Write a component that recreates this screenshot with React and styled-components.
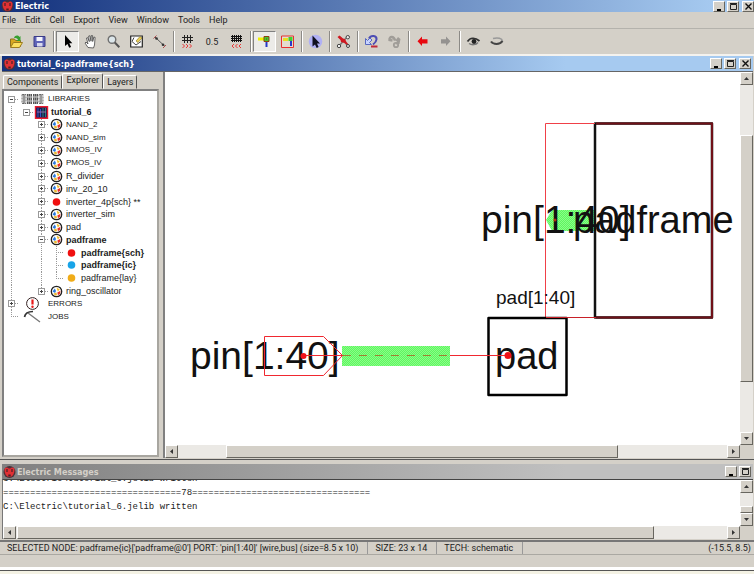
import React, { useState } from "react";
import styled, { createGlobalStyle, css } from "styled-components";

const GlobalStyle = createGlobalStyle`
  * {
    box-sizing: border-box;
  }

  body {
    margin: 0;
    background: #d4d0c8;
    color: #222;
    font-family: Roboto, "DejaVu Sans Condensed", sans-serif;
    font-size: 9px;
    line-height: 12px;
  }

  button {
    padding: 0;
    border: none;
    background: none;
    color: inherit;
    font: inherit;
  }
`;

const MENUS = ["File", "Edit", "Cell", "Export", "View", "Window", "Tools", "Help"];

const TREE = [
  { guides: ["minusTop"], icon: "libraries", label: "LIBRARIES" },
  { guides: ["line", "minusTop"], icon: "library", label: "tutorial_6", bold: true },
  { guides: ["line", "blank", "plus"], icon: "cell", label: "NAND_2" },
  { guides: ["line", "blank", "plus"], icon: "cell", label: "NAND_sim" },
  { guides: ["line", "blank", "plus"], icon: "cell", label: "NMOS_IV" },
  { guides: ["line", "blank", "plus"], icon: "cell", label: "PMOS_IV" },
  { guides: ["line", "blank", "plus"], icon: "cell", label: "R_divider" },
  { guides: ["line", "blank", "plus"], icon: "cell", label: "inv_20_10" },
  { guides: ["line", "blank", "plus"], icon: "red", label: "inverter_4p{sch} **" },
  { guides: ["line", "blank", "plus"], icon: "cell", label: "inverter_sim" },
  { guides: ["line", "blank", "plus"], icon: "cell", label: "pad" },
  { guides: ["line", "blank", "minus"], icon: "cell", label: "padframe", bold: true },
  { guides: ["line", "blank", "line", "tee"], icon: "red", label: "padframe{sch}", bold: true },
  { guides: ["line", "blank", "line", "tee"], icon: "blue", label: "padframe{ic}", bold: true },
  { guides: ["line", "blank", "line", "end"], icon: "orange", label: "padframe{lay}" },
  { guides: ["line", "blank", "plusEnd"], icon: "cell", label: "ring_oscillator" },
  { guides: ["plus"], icon: "errors", label: "ERRORS" },
  { guides: ["end"], icon: "jobs", label: "JOBS" },
];

const DOTS = { red: "#f01010", blue: "#18a4e8", orange: "#f0ac18" };

const Logo = () => (
  <svg width="13" height="12" viewBox="0 0 13 12" aria-hidden="true">
    <circle cx="6.5" cy="6" r="6" fill="#4a3038" />
    <path d="M1.500 3.500C1.500 1 4.500 .8 5.700 2.500h1.600C8.500 .8 11.500 1 11.500 3.500 11.500 8 9.500 11 6.500 11s-5-3-5-7.500z" fill="#e03034" />
    <path d="M4 3v3M9 3v3" stroke="#4a2028" strokeWidth="1.200" />
    <path d="M5.300 8.500h2.400v2H5.300z" fill="#4a2028" />
  </svg>
);

const TreeIcon = ({ kind }) => {
  if (DOTS[kind]) {
    return (
      <svg width="15" height="12" viewBox="0 0 15 12">
        <circle cx="7.5" cy="6" r="3.8" fill={DOTS[kind]} />
      </svg>
    );
  }
  if (kind === "libraries") {
    return (
      <svg width="27" height="12" viewBox="0 0 27 12">
        <path d="M3 1.500h4v9H3zM20 1.500h4v9h-4z" fill="#ddd" stroke="#777" strokeDasharray="2 1" />
        <path d="M8 1h5v10H8zM14 1h5v10h-5z" fill="#555" />
        <path d="M8 4h11M8 8h11" stroke="#ddd" />
        <path d="M9.500 1v10M11.500 1v10M15.500 1v10M17.500 1v10" stroke="#bbb" strokeWidth=".7" />
        <path d="M5 1v10M22 1v10" stroke="#555" />
      </svg>
    );
  }
  if (kind === "library") {
    return (
      <svg width="15" height="13" viewBox="0 0 15 13">
        <path d="M1.500 .7h12v11.600h-12z" fill="#1c1c50" stroke="#e81c30" strokeWidth="1.400" />
        <path d="M4 2v9M6.500 3v8" stroke="#3554c8" />
        <path d="M9 2v9M11.500 2v9" stroke="#268080" />
        <path d="M3 6h9" stroke="#9468a0" />
      </svg>
    );
  }
  if (kind === "errors") {
    return (
      <svg width="27" height="13" viewBox="0 0 27 13">
        <circle cx="13.500" cy="6.500" r="5.900" fill="#fff" stroke="#332020" strokeWidth="1" />
        <path d="M13.500 2.500v5" stroke="#e81818" strokeWidth="2.200" />
        <circle cx="13.500" cy="9.700" r="1.200" fill="#e81818" />
      </svg>
    );
  }
  if (kind === "jobs") {
    return (
      <svg width="27" height="13" viewBox="0 0 27 13">
        <path d="M5.500 7C6 4 9 1.500 14 1.500" fill="none" stroke="#333" strokeWidth="1.700" />
        <path d="M9 3l12 9" stroke="#777" strokeWidth="1.300" />
      </svg>
    );
  }
  return (
    <svg width="15" height="13" viewBox="0 0 15 13">
      <circle cx="7.500" cy="6.500" r="5.200" fill="#fff" stroke="#222" strokeWidth="1.300" />
      <path d="M3.500 6.500l2.300-3 1.200 2.500-1 2z" fill="#2878e0" />
      <path d="M7.500 2.500l3.300 2-2 2z" fill="#f0bc28" />
      <path d="M4.500 8.500l3-1 .5 2.800-2 .3z" fill="#e8b830" />
      <path d="M8.300 7.500l3.200-1.700-.5 3-2 1.500z" fill="#e83028" />
    </svg>
  );
};

const GLYPHS = {
  open: (
    <>
      <path d="M1.500 12.500V5h4l1 1.500h5v6z" fill="#d8a820" stroke="#8c7020" />
      <path d="M1.500 13.500l3-5h9l-3 5z" fill="#fce060" stroke="#9c7c20" />
      <path d="M5 4c1-3 4-3 5.500-1l1-1v5H7.500l1.500-1.500C8 4 7 4 5 4z" fill="#36a030" />
    </>
  ),
  save: (
    <>
      <path d="M2 2.500h11v10H2z" fill="#6064b8" stroke="#3c3c88" />
      <path d="M4.500 3h6v4h-6z" fill="#f4f4fc" />
      <path d="M5 9h5.500v3.500H5z" fill="#d8d8ee" />
    </>
  ),
  arrow: <path d="M5 1v11l2.500-2 1.700 3.800 1.900-.9L9.300 9.200h3z" fill="#000" />,
  hand: (
    <path
      d="M5 13.500L2 9l1-1 2 2-1.500-6 1.200-.4 1.600 4L5.700 2 7 1.800l1 5.400.3-5.700 1.300.1.100 5.900 1.200-4.500 1.200.4L11.500 11l-1 3z"
      fill="#fff"
      stroke="#444"
      strokeWidth=".8"
    />
  ),
  zoom: (
    <>
      <circle cx="6" cy="5.500" r="3.800" fill="#dce6ea" stroke="#707070" strokeWidth="1.400" />
      <path d="M8.800 8.500l4.500 4.800" stroke="#555" strokeWidth="2" />
    </>
  ),
  outline: (
    <>
      <path d="M1.700 2h11.600v11H1.700z" fill="#fff" stroke="#222" strokeWidth="1.200" />
      <path d="M5 3.500L3 7.500l4 3.500 5-3.500" fill="none" stroke="#444" />
      <path d="M7 7l4-4.500 2 1.500-4 4.500z" fill="#ecd058" stroke="#806c20" strokeWidth=".6" />
    </>
  ),
  measure: (
    <>
      <path d="M3 3l10 9.500" stroke="#555" strokeWidth="1" />
      <path d="M1.500 4.500L4.500 1.500M11 14l3-3" stroke="#b05050" />
      <circle cx="4.500" cy="4.500" r="1.300" fill="#333" />
      <circle cx="11" cy="10.800" r="1.300" fill="#333" />
    </>
  ),
  gridOut: (
    <>
      <path d="M2 3.500h11M2 6.500h11M4.500 1v8M7.500 1v8M10.500 1v8" stroke="#222" />
      <path d="M2.500 10l2 2-2 2M6 10l2 2-2 2M9.500 10l2 2-2 2" fill="none" stroke="#e83838" />
    </>
  ),
  gridIn: (
    <>
      <path d="M2 2.500h11M2 4.500h11M2 6.500h11M3.500 1v7M5.500 1v7M7.500 1v7M9.500 1v7M11.500 1v7" stroke="#111" />
      <path d="M5 10l-2 2 2 2M8.500 10l-2 2 2 2M12 10l-2 2 2 2" fill="none" stroke="#e83838" />
    </>
  ),
  port: (
    <>
      <path d="M1 5h7" stroke="#f0f000" strokeWidth="3" />
      <path d="M9.500 6v7" stroke="#2838c8" strokeWidth="2" />
      <path d="M7 2.500h5v5H7z" fill="#40c830" stroke="#904010" />
      <path d="M9 4.500h1v1H9z" fill="#803010" />
    </>
  ),
  area: (
    <>
      <path d="M1.500 2h12v11.500h-12z" fill="#e4dcd0" stroke="#e83030" />
      <path d="M3 5.500h5" stroke="#e8e020" strokeWidth="3" />
      <path d="M11 6v6" stroke="#2838c8" strokeWidth="2" />
      <path d="M8.500 3h4v4h-4z" fill="#40d030" />
    </>
  ),
  special: (
    <>
      <circle cx="7.500" cy="7.500" r="6.800" fill="#b0b0f4" />
      <path d="M4.500 1.500v11l2.500-2 1.700 3.500 1.900-.9L9 9.500h3z" fill="#101020" />
    </>
  ),
  tools: (
    <>
      <path d="M3 12l8-9M4 3l8 9" stroke="#777" strokeWidth="1.400" />
      <path d="M1.500 3l2-1.500L7 4.500l2 .5 1.500 3 2.500 3-1 .8L8.500 9 5 8 4.500 6z" fill="#d01820" />
      <circle cx="11.800" cy="3.200" r="1.700" fill="#eee" stroke="#444" />
      <circle cx="3" cy="12" r="1.700" fill="#eee" stroke="#444" />
      <circle cx="12" cy="12" r="1.500" fill="#eee" stroke="#444" />
    </>
  ),
  undo: (
    <>
      <path d="M5 4.500C7 .5 13 1.500 12.500 5.500 12.300 7.500 11 9 9 10.500" fill="none" stroke="#4c4cb4" strokeWidth="2" />
      <path d="M1.500 4.500v6h6l-2-2L8 6 6 4 3.500 6.500z" fill="#c8d4ff" stroke="#5868c0" />
      <path d="M7 12.500h6.500" stroke="#c02838" strokeWidth="2" />
    </>
  ),
  redo: (
    <>
      <path d="M8 6.500C7 2 2 2 2.500 6l3 .5" fill="none" stroke="#a09d98" strokeWidth="2.400" />
      <path d="M5 5l3 2 3-4 2.500 2-1 5-4 .5 1.500-3z" fill="#a09d98" />
      <circle cx="9" cy="11" r="2.200" fill="none" stroke="#a09d98" strokeWidth="1.800" />
    </>
  ),
  back: <path d="M2.500 7.300L7 2.500v2.700h5.500v4.300H7V12z" fill="#e80810" />,
  forward: <path d="M12.500 7.300L8 2.500v2.700H3v4.300h5V12z" fill="#949290" />,
  eyeOpen: (
    <>
      <path d="M1.500 7.500C4 3.500 9 3 13.500 7" fill="none" stroke="#333" strokeWidth="1.700" />
      <path d="M3 9.500c3 2 7 1.500 9-1" fill="none" stroke="#777" strokeWidth="1.300" />
      <circle cx="8" cy="7.500" r="2.400" fill="#222" />
    </>
  ),
  eyeClosed: (
    <>
      <path d="M4 4.500c5-1.500 9 0 9.500 2.500" fill="none" stroke="#999" strokeWidth="1.500" />
      <path d="M2 7.500c2 3 9 3.500 11.500-.5" fill="none" stroke="#444" strokeWidth="2" />
    </>
  ),
};

const TOOLS = [
  { id: "open", label: "Open" },
  { id: "save", label: "Save" },
  null,
  { id: "arrow", label: "Select", pressed: true },
  { id: "hand", label: "Pan" },
  { id: "zoom", label: "Zoom" },
  { id: "outline", label: "Outline" },
  { id: "measure", label: "Measure" },
  null,
  { id: "gridOut", label: "Larger grid" },
  { id: "step", label: "Grid step", text: "0.5" },
  { id: "gridIn", label: "Smaller grid" },
  null,
  { id: "port", label: "Select objects", pressed: true },
  { id: "area", label: "Select area" },
  null,
  { id: "special", label: "Special select" },
  null,
  { id: "tools", label: "Preferences" },
  null,
  { id: "undo", label: "Undo" },
  { id: "redo", label: "Redo" },
  null,
  { id: "back", label: "Back" },
  { id: "forward", label: "Forward" },
  null,
  { id: "eyeOpen", label: "Expand" },
  { id: "eyeClosed", label: "Unexpand" },
];

const WINDOW_GLYPHS = {
  minimize: <path d="M2 8h4" stroke="#000" strokeWidth="2" />,
  maximize: <path d="M1.500 2.500h6v5h-6zM1 1.500h7" fill="none" stroke="#222" />,
  close: <path d="M1.500 1.500l6 6M7.500 1.500l-6 6" stroke="#111" strokeWidth="1.400" />,
};

const WindowButtons = ({ names }) => (
  <WindowButtonGroup>
    {names.map((name) => (
      <WindowButton key={name} aria-label={name} $apart={name === "close"}>
        <svg width="9" height="9" viewBox="0 0 9 9">
          {WINDOW_GLYPHS[name]}
        </svg>
      </WindowButton>
    ))}
  </WindowButtonGroup>
);

const ARROWS = {
  up: "M1 5h5L3.500 2z",
  down: "M1 2h5L3.500 5z",
  left: "M5 1v5L2 3.500z",
  right: "M2 1v5l3-2.500z",
};

const ScrollArrow = ({ to }) => (
  <ScrollButton aria-label={`Scroll ${to}`}>
    <svg width="7" height="7" viewBox="0 0 7 7">
      <path d={ARROWS[to]} fill="#333" />
    </svg>
  </ScrollButton>
);

const ScrollBar = ({ vertical, before, size, after }) => (
  <ScrollTrack $vertical={vertical}>
    <ScrollArrow to={vertical ? "up" : "left"} />
    <ScrollSpace $grow={before} />
    <ScrollThumb $grow={size} />
    <ScrollSpace $grow={after} />
    <ScrollArrow to={vertical ? "down" : "right"} />
  </ScrollTrack>
);

const Schematic = () => (
  <Drawing role="img" aria-label="padframe schematic">
    <defs>
      <pattern id="bus" width="2" height="2" patternUnits="userSpaceOnUse">
        <path d="M0 0h2v2H0z" fill="#88ff88" />
        <path d="M0 0h1v1H0zM1 1h1v1H1z" fill="#60f460" />
      </pattern>
    </defs>

    <path d="M381 148l6-10h43v21h-43z" fill="url(#bus)" />
    <path d="M177 274h108v20H177z" fill="url(#bus)" />

    <path d="M430 51.500h117v194H430z" fill="none" stroke="#111" strokeWidth="2.500" strokeLinejoin="round" />
    <path d="M431 51.500h116v194H431" fill="none" stroke="#701018" strokeWidth="2" />
    <path d="M430 51.500h-49.500v194H430" fill="none" stroke="#f04048" />
    <path d="M323.500 246h78v77h-78z" fill="none" stroke="#000" strokeWidth="2.500" strokeLinejoin="round" />
    <path d="M381 245.500h50" stroke="#c82028" />

    <Label x="25" y="297" $size={39}>
      pin[1:40]
    </Label>
    <Label x="330" y="297" $size={38}>
      pad
    </Label>
    <Label x="316" y="161" $size={39}>
      pin[1:40]
    </Label>
    <Label x="408" y="161" $size={38}>
      padframe
    </Label>
    <Label x="331" y="232" $size={19}>
      pad[1:40]
    </Label>

    <path d="M99.500 264.500h59l19 19-19 20h-59z" fill="none" stroke="#f02830" />
    <path d="M138 283.500h40M285 283.500h58" stroke="#f02830" />
    <path d="M178 283.500h107" stroke="#a08030" strokeDasharray="8 8" />
    <circle cx="138.500" cy="284" r="3" fill="#f01018" />
    <circle cx="343" cy="283.500" r="3.500" fill="#f01018" />
    <circle cx="390" cy="148" r="1.500" fill="#b03010" />
  </Drawing>
);

const App = () => {
  const [tab, setTab] = useState("Explorer");

  return (
    <>
      <GlobalStyle />
      <Shell>
        <TitleBar>
          <Logo />
          <Title>Electric</Title>
          <WindowButtons names={["minimize", "maximize", "close"]} />
        </TitleBar>

        <MenuBar>
          {MENUS.map((menu) => (
            <MenuButton key={menu}>{menu}</MenuButton>
          ))}
        </MenuBar>

        <ToolBar>
          {TOOLS.map((tool, i) =>
            tool ? (
              <ToolButton key={tool.id} aria-label={tool.label} $pressed={tool.pressed} $wide={tool.text}>
                {tool.text || (
                  <svg width="15" height="15" viewBox="0 0 15 15">
                    {GLYPHS[tool.id]}
                  </svg>
                )}
              </ToolButton>
            ) : (
              <ToolSeparator key={i} />
            )
          )}
        </ToolBar>

        <EditFrame>
          <TitleBar $inner>
            <Logo />
            <Title>{"tutorial_6:padframe{sch}"}</Title>
            <WindowButtons names={["minimize", "maximize", "close"]} />
          </TitleBar>

          <EditBody>
            <SideBar>
              <Tabs role="tablist">
                {["Components", "Explorer", "Layers"].map((name) => (
                  <Tab
                    key={name}
                    role="tab"
                    aria-selected={tab === name}
                    $active={tab === name}
                    onClick={() => setTab(name)}
                  >
                    {name}
                  </Tab>
                ))}
              </Tabs>
              <TreePanel>
                <Tree>
                  {TREE.map(({ guides, icon, label, bold }) => (
                    <TreeRow key={label}>
                      {guides.map((guide, i) => (
                        <Guide key={i} $kind={guide}>
                          {guide.startsWith("plus") && <Expander aria-label={`Expand ${label}`} $closed />}
                          {guide.startsWith("minus") && <Expander aria-label={`Collapse ${label}`} />}
                        </Guide>
                      ))}
                      <TreeIcon kind={icon} />
                      <TreeLabel $bold={bold} $caps={/^[A-Z]{2}/.test(label)}>
                        {label}
                      </TreeLabel>
                    </TreeRow>
                  ))}
                </Tree>
              </TreePanel>
            </SideBar>

            <ScrollGrid>
              <Canvas>
                <Schematic />
              </Canvas>
              <ScrollBar vertical before={50} size={247} after={50} />
              <ScrollBar before={48} size={392} after={110} />
            </ScrollGrid>
          </EditBody>
        </EditFrame>

        <MessageFrame>
          <TitleBar $inner $idle>
            <Logo />
            <Title>Electric Messages</Title>
            <WindowButtons names={["minimize", "maximize"]} />
          </TitleBar>
          <MessageBody>
            <ScrollGrid>
              <Log>
                <LogLine>{"C:\\Electric\\tutorial_6.jelib written"}</LogLine>
                <LogLine>{`${"=".repeat(33)}78${"=".repeat(33)}`}</LogLine>
                <LogLine>{"C:\\Electric\\tutorial_6.jelib written"}</LogLine>
              </Log>
              <ScrollBar vertical before={14} size={5} after={0} />
              <ScrollBar before={1} size={638} after={73} />
            </ScrollGrid>
          </MessageBody>
        </MessageFrame>

        <StatusBar>
          <Status>{"SELECTED NODE: padframe{ic}['padframe@0'] PORT: 'pin[1:40]' [wire,bus] (size=8.5 x 10)"}</Status>
          <Status>SIZE: 23 x 14</Status>
          <Status>TECH: schematic</Status>
          <Position>(-15.5, 8.5)</Position>
        </StatusBar>
        <BottomEdge />
      </Shell>
    </>
  );
};

const raised = css`
  border: 1px solid;
  border-color: #fff #68665f #68665f #fff;
  background: #d4d0c8;
`;

const titleFill = ({ $inner, $idle }) => {
  if ($idle) return "linear-gradient(90deg, #808080, #c0c0c0 75%)";
  return `linear-gradient(90deg, #12307c, #a6caf0 ${$inner ? 75 : 95}%)`;
};

const Shell = styled.div`
  display: flex;
  flex-direction: column;
  min-height: 100vh;
`;

const TitleBar = styled.header`
  display: flex;
  align-items: center;
  flex: none;
  gap: 1px;
  height: ${({ $inner }) => ($inner ? 15 : 12)}px;
  padding: 0 ${({ $inner }) => ($inner ? 2 : 0)}px 0 1px;
  color: ${({ $idle }) => ($idle ? "#d4d0c8" : "#fff")};
  background: ${titleFill};
`;

const Title = styled.h1`
  flex: 1;
  margin: 0;
  font-family: "DejaVu Sans Condensed", "DejaVu Sans", sans-serif;
  font-size: 9px;
  font-weight: 700;
  line-height: 12px;
`;

const WindowButtonGroup = styled.div`
  display: flex;
  gap: 2px;
`;

const WindowButton = styled.button`
  ${raised}
  display: flex;
  align-items: center;
  justify-content: center;
  width: 12px;
  height: 11px;
  margin-left: ${({ $apart }) => ($apart ? 1 : 0)}px;
`;

const MenuBar = styled.nav`
  display: flex;
  gap: 9px;
  height: 17px;
  padding: 2px;
  border-bottom: 1px solid #b4b2ac;
`;

const MenuButton = styled.button`
  height: 12px;
`;

const ToolBar = styled.div`
  display: flex;
  height: 25px;
  padding: 2px 5px;
`;

const ToolButton = styled.button`
  display: flex;
  align-items: center;
  justify-content: center;
  width: ${({ $wide }) => ($wide ? 26 : 23)}px;
  height: 21px;
  ${({ $pressed }) =>
    $pressed &&
    css`
      border: 1px solid;
      border-color: #808080 #fff #fff #808080;
      background: #ecebe8;
    `}
`;

const ToolSeparator = styled.span`
  width: 5px;
  background: linear-gradient(90deg, #8c8a86 1px, #fff 1px) center / 2px 100% no-repeat;
`;

const EditFrame = styled.section`
  display: flex;
  flex-direction: column;
  flex: 1;
  padding: 0 1px 1px 2px;
  border-top: 2px solid #f4f2ee;
  border-bottom: 1px solid #555;
`;

const EditBody = styled.div`
  display: flex;
  flex: 1;
  border-top: 1px solid #666;
`;

const SideBar = styled.aside`
  display: flex;
  flex-direction: column;
  width: 163px;
  padding: 1px 4px 1px 0;
  border-right: 2px solid #808080;
`;

const Tabs = styled.div`
  display: flex;
  align-items: flex-end;
  height: 16px;
  padding-left: 1px;
`;

const Tab = styled.button`
  height: ${({ $active }) => ($active ? 16 : 14)}px;
  padding: 0 3px ${({ $active }) => ($active ? 2 : 0)}px;
  border: 1px solid;
  border-color: #fff #555 transparent #fff;
  border-radius: 2px 2px 0 0;
`;

const TreePanel = styled.div`
  flex: 1;
  padding-top: 2px;
  border: 2px solid;
  border-color: #808080 #a8a6a0 #a8a6a0 #808080;
  background: #fff;
`;

const Tree = styled.ul`
  display: grid;
  grid-template-rows: repeat(18, 1fr);
  height: 230px;
  margin: 0;
  padding: 0;
  list-style: none;
`;

const TreeRow = styled.li`
  display: flex;
  align-items: center;
  min-height: 0;

  > svg {
    flex: none;
  }
`;

const dotsDown = "repeating-linear-gradient(#999 0 1px, transparent 1px 2px)";
const dotsAcross = "repeating-linear-gradient(90deg, #999 0 1px, transparent 1px 2px)";
const across = `${dotsAcross} 7px 50% / 8px 1px no-repeat`;

const guides = {
  blank: "none",
  line: `${dotsDown} 7px 0 / 1px 100% no-repeat`,
  tee: `${dotsDown} 7px 0 / 1px 100% no-repeat, ${across}`,
  end: `${dotsDown} 7px 0 / 1px 50% no-repeat, ${across}`,
  plus: `${dotsDown} 7px 0 / 1px 100% no-repeat, ${across}`,
  plusEnd: `${dotsDown} 7px 0 / 1px 50% no-repeat, ${across}`,
  minus: `${dotsDown} 7px 0 / 1px 100% no-repeat, ${across}`,
  minusTop: `${across}`,
};

const Guide = styled.span`
  display: flex;
  align-items: center;
  align-self: stretch;
  flex: none;
  width: 15px;
  padding-left: 4px;
  background: ${({ $kind }) => guides[$kind]};
`;

const Expander = styled.button`
  width: 7px;
  height: 7px;
  border: 1px solid #999;
  background:
    linear-gradient(#444, #444) center / 3px 1px no-repeat,
    linear-gradient(#444, #444) center / 1px ${({ $closed }) => ($closed ? 3 : 0)}px no-repeat,
    #fff;
`;

const TreeLabel = styled.span`
  padding-left: 2px;
  font-family: "Liberation Sans", Arial, sans-serif;
  font-size: ${({ $caps }) => ($caps ? 8 : 9)}px;
  font-weight: ${({ $bold }) => ($bold ? 700 : 400)};
  line-height: 12px;
  white-space: nowrap;
`;

const ScrollGrid = styled.div`
  display: grid;
  grid-template: minmax(0, 1fr) 13px / minmax(0, 1fr) 13px;
  flex: 1;
`;

const Canvas = styled.main`
  display: flex;
  background: #fff;
`;

const Drawing = styled.svg`
  flex: 1;
  width: 100%;
  height: 100%;
`;

const Label = styled.text`
  font-family: "Liberation Sans", Arial, sans-serif;
  font-size: ${({ $size }) => $size}px;
  fill: #111;
`;

const ScrollTrack = styled.div`
  display: flex;
  flex-direction: ${({ $vertical }) => ($vertical ? "column" : "row")};
  background: #ebe9e5;
`;

const ScrollButton = styled.button`
  ${raised}
  display: flex;
  align-items: center;
  justify-content: center;
  flex: none;
  width: 13px;
  height: 13px;
`;

const ScrollSpace = styled.span`
  flex: ${({ $grow }) => $grow} 1 0;
`;

const ScrollThumb = styled.span`
  ${raised}
  flex: ${({ $grow }) => $grow} 1 0;
`;

const MessageFrame = styled.section`
  padding: 4px 1px 1px 2px;
  border-bottom: 2px solid #777;
`;

const MessageBody = styled.div`
  display: flex;
  height: 60px;
  border-top: 1px solid #444;
  border-left: 1px solid #777;
`;

const Log = styled.div`
  display: flex;
  flex-direction: column;
  justify-content: flex-end;
  overflow: hidden;
  padding-bottom: 12px;
  background: #fff;
`;

const LogLine = styled.div`
  flex: none;
  font-family: "Liberation Mono", "Courier New", monospace;
  font-size: 9px;
  line-height: 14px;
  white-space: pre;
`;

const StatusBar = styled.footer`
  display: flex;
  height: 13px;
  border-bottom: 1px solid #aaa8a2;
  white-space: nowrap;
`;

const Status = styled.span`
  padding: 0 9px 0 7px;
  border-right: 1px solid #999;
`;

const Position = styled.span`
  margin-left: auto;
  padding-right: 3px;
`;

const BottomEdge = styled.div`
  height: 19px;
  border-bottom: 3px solid #f4f2e4;
  background: linear-gradient(#d4d0c8 12px, #fff 12px 15px, #555 15px);
`;

export default App;
